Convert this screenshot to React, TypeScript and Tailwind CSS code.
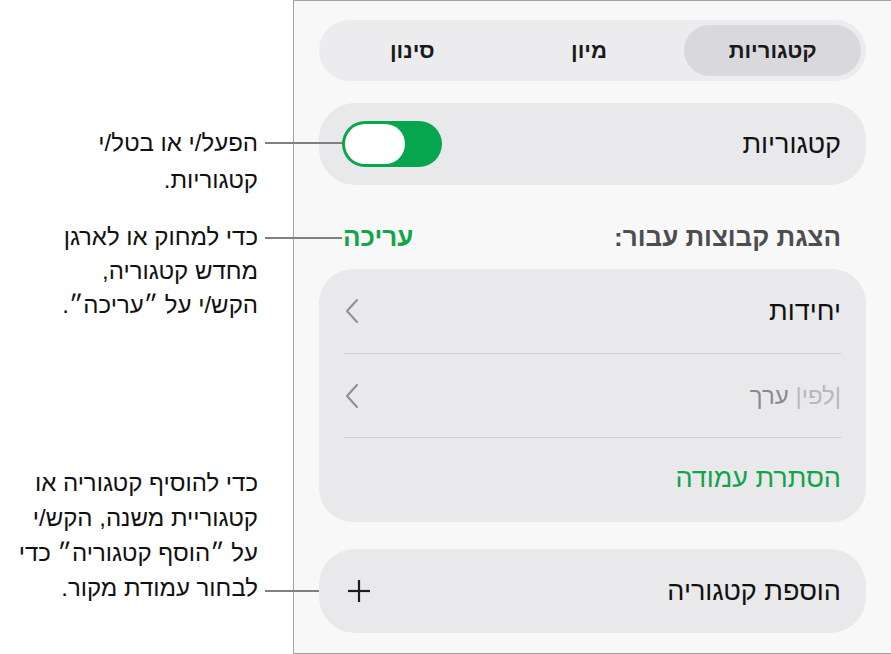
import React from "react";

const FONT = { fontFamily: '"Liberation Sans", "DejaVu Sans", Arial, sans-serif' };

function Chevron() {
  return (
    <svg width="16" height="26" viewBox="0 0 16 26" fill="none">
      <polyline points="13,2 3,13 13,24" stroke="#8e8e93" strokeWidth="2" strokeLinecap="round" strokeLinejoin="round" />
    </svg>
  );
}

function Plus() {
  return (
    <svg width="24" height="24" viewBox="0 0 24 24" fill="none">
      <line x1="12" y1="1" x2="12" y2="23" stroke="#1c1c1e" strokeWidth="2.2" />
      <line x1="1" y1="12" x2="23" y2="12" stroke="#1c1c1e" strokeWidth="2.2" />
    </svg>
  );
}

function Toggle() {
  return (
    <div dir="ltr" className="w-[100px] h-[46px] rounded-full bg-[#05a64e] p-[3px] flex justify-start">
      <div className="w-[60px] h-[40px] rounded-full bg-white" />
    </div>
  );
}

function Segmented() {
  const items = ["קטגוריות", "מיון", "סינון"];
  return (
    <div className="h-[61px] rounded-full bg-[#ececee] p-[5px] flex">
      {items.map((t, i) => (
        <div
          key={t}
          className={
            "flex-1 flex items-center justify-center rounded-full text-[22px] font-bold text-[#1a1a1a] " +
            (i === 0 ? "bg-[#d9d9dd] ml-[7px]" : "")
          }
        >
          {t}
        </div>
      ))}
    </div>
  );
}

export default function App() {
  return (
    <div style={FONT} className="relative w-[891px] h-[654px] bg-white flex overflow-hidden">
      {/* annotation column */}
      <div className="w-[293px] shrink-0" />

      {/* settings panel */}
      <div dir="rtl" className="flex-1 border-l border-y border-[#a3a3a3] bg-[#f8f8f8] pt-[19px] pr-[25px] pl-[25px] flex flex-col">
        <Segmented />

        <div className="mt-[22px] h-[82px] rounded-[36px] bg-[#e9e9eb] flex items-center justify-between pr-[25px] pl-[23px]">
          <span className="text-[27px] text-[#111]">קטגוריות</span>
          <Toggle />
        </div>

        <div className="mt-[39px] h-[26px] flex items-center justify-between pr-[25px] pl-[24px]">
          <span className="text-[26px] font-bold text-[#4d4d50]">הצגת קבוצות עבור:</span>
          <span className="text-[26px] font-bold text-[#12a44a]">עריכה</span>
        </div>

        <div className="mt-[19px] rounded-[34px] bg-[#e9e9eb] flex flex-col">
          <div className="h-[84px] flex items-center justify-between pr-[25px] pl-[25px]">
            <span className="text-[27px] text-[#111]">יחידות</span>
            <Chevron />
          </div>
          <div className="h-px bg-[#cfcfd2] mx-[25px]" />
          <div className="h-[83px] flex items-center justify-between pr-[25px] pl-[25px]">
            <span className="text-[24px]">
              <span className="text-[#b8b8bb]">|לפי|</span> <span className="text-[#8a8a8e]">ערך</span>
            </span>
            <Chevron />
          </div>
          <div className="h-px bg-[#cfcfd2] mx-[25px]" />
          <div className="h-[84px] flex items-center pr-[25px] pb-[4px]">
            <span className="text-[27px] text-[#12a44a]">הסתרת עמודה</span>
          </div>
        </div>

        <div className="mt-[27px] h-[84px] rounded-[36px] bg-[#e9e9eb] flex items-center justify-between pr-[25px] pl-[28px]">
          <span className="text-[27px] text-[#111]">הוספת קטגוריה</span>
          <Plus />
        </div>
      </div>

      {/* callouts */}
      <div dir="rtl" className="absolute right-[633px] top-[124px] text-right text-[24px] leading-[37px] text-[#111] whitespace-nowrap">
        הפעל/י או בטל/י
        <br />
        קטגוריות.
      </div>
      <div dir="rtl" className="absolute right-[633px] top-[220px] text-right text-[24px] leading-[34px] text-[#111] whitespace-nowrap">
        כדי למחוק או לארגן
        <br />
        מחדש קטגוריה,
        <br />
        הקש/י על ״עריכה״.
      </div>
      <div dir="rtl" className="absolute right-[633px] top-[465px] text-right text-[24px] leading-[35px] text-[#111] whitespace-nowrap">
        כדי להוסיף קטגוריה או
        <br />
        קטגוריית משנה, הקש/י
        <br />
        על ״הוסף קטגוריה״ כדי
        <br />
        לבחור עמודת מקור.
      </div>

      <div className="absolute left-[265px] top-[142px] w-[77px] h-[1.5px] bg-[#808080]" />
      <div className="absolute left-[265px] top-[237px] w-[77px] h-[1.5px] bg-[#808080]" />
      <div className="absolute left-[265px] top-[590px] w-[54px] h-[1.5px] bg-[#808080]" />
    </div>
  );
}
